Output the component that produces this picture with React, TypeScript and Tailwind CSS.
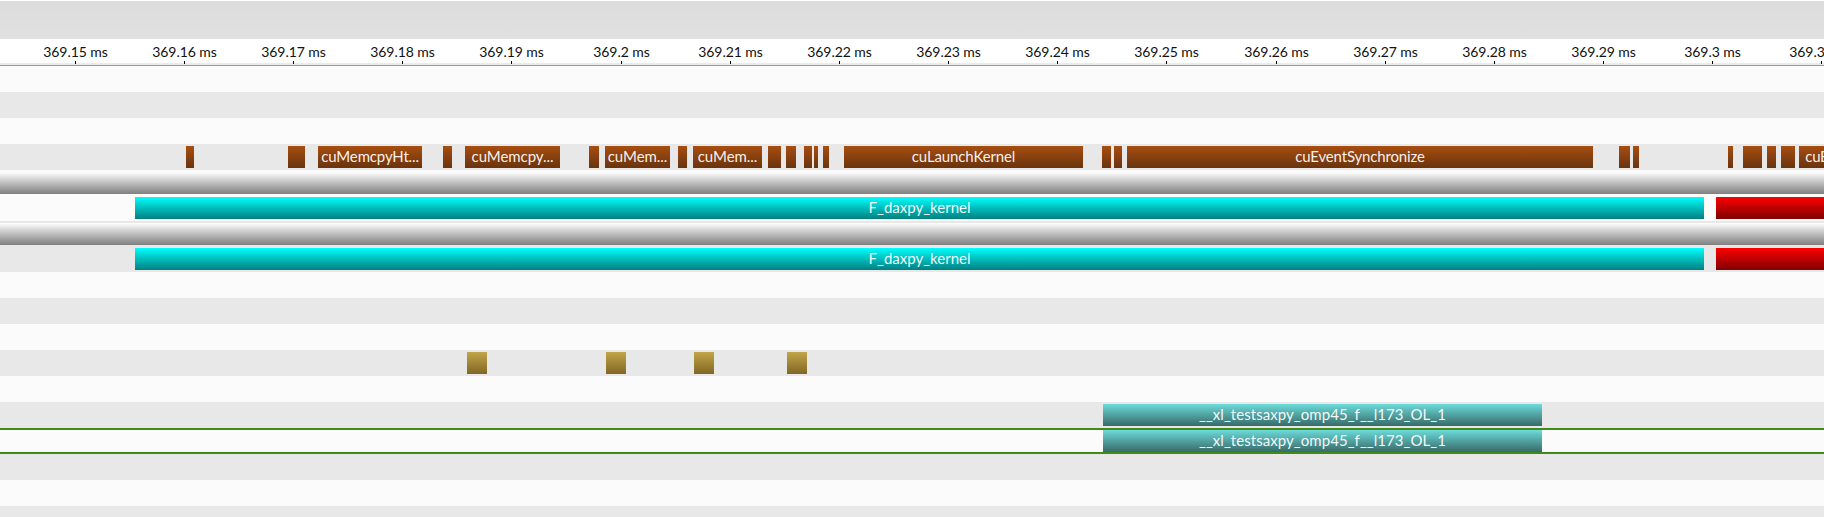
import clsx from "clsx";

type Bar = { box: string; label?: string; text?: string };

const ticks: [string, string][] = [
  ["369.15", "ml-[75px]"],
  ["369.16", "ml-[108px]"],
  ["369.17", "ml-[108px]"],
  ["369.18", "ml-[108px]"],
  ["369.19", "ml-[108px]"],
  ["369.2", "ml-[109px]"],
  ["369.21", "ml-[108px]"],
  ["369.22", "ml-[108px]"],
  ["369.23", "ml-[108px]"],
  ["369.24", "ml-[108px]"],
  ["369.25", "ml-[108px]"],
  ["369.26", "ml-[109px]"],
  ["369.27", "ml-[108px]"],
  ["369.28", "ml-[108px]"],
  ["369.29", "ml-[108px]"],
  ["369.3", "ml-[108px]"],
  ["369.31", "ml-[108px]"],
];

const driverCalls: Bar[] = [
  { box: "ml-[186px] w-[8px]" },
  { box: "ml-[94px] w-[17px]" },
  { box: "ml-[13px] w-[104px]", label: "cuMemcpyHt...", text: "tracking-[-0.15px]" },
  { box: "ml-[21px] w-[9px]" },
  { box: "ml-[13px] w-[95px]", label: "cuMemcpy...", text: "tracking-[-0.06px]" },
  { box: "ml-[29px] w-[10px]" },
  { box: "ml-[6px] w-[65px]", label: "cuMem...", text: "tracking-[-0.06px]" },
  { box: "ml-[8px] w-[9px]" },
  { box: "ml-[6px] w-[69px]", label: "cuMem...", text: "tracking-[-0.06px]" },
  { box: "ml-[6px] w-[13px]" },
  { box: "ml-[5px] w-[10px]" },
  { box: "ml-[8px] w-[8px]" },
  { box: "ml-[2px] w-[4px]" },
  { box: "ml-[5px] w-[6px]" },
  { box: "ml-[15px] w-[239px]", label: "cuLaunchKernel", text: "tracking-[-0.13px]" },
  { box: "ml-[19px] w-[9px]" },
  { box: "ml-[3px] w-[8px]" },
  { box: "ml-[5px] w-[466px]", label: "cuEventSynchronize", text: "tracking-[-0.16px]" },
  { box: "ml-[26px] w-[11px]" },
  { box: "ml-[3px] w-[6px]" },
  { box: "ml-[89px] w-[5px]" },
  { box: "ml-[10px] w-[19px]" },
  { box: "ml-[5px] w-[9px]" },
  { box: "ml-[5px] w-[14px]" },
  { box: "ml-[4px] w-[73px]", label: "cuEvent...", text: "tracking-[-0.3px]" },
];

const copies: Bar[] = [
  { box: "ml-[467px] w-[20px]" },
  { box: "ml-[119px] w-[20px]" },
  { box: "ml-[68px] w-[20px]" },
  { box: "ml-[73px] w-[20px]" },
];

const kernel: Bar[] = [
  { box: "ml-[1103px] w-[439px]", label: "__xl_testsaxpy_omp45_f__l173_OL_1", text: "tracking-[0.05px]" },
];

const brown = "from-[#a84e10] to-[#6a330e]";
const gold = "from-[#c2a548] to-[#826726]";
const teal = "from-[#6cdcdb] to-[#376b69]";

function Bars({ bars, color }: { bars: Bar[]; color: string }) {
  return (
    <div className="flex h-[22px] overflow-hidden">
      {bars.map((b, i) => (
        <div key={i} className={clsx("flex shrink-0 justify-center bg-linear-to-b", color, b.box)}>
          {b.label && (
            <span className={clsx("text-[15px] leading-[21px] whitespace-nowrap text-white/95", b.text)}>{b.label}</span>
          )}
        </div>
      ))}
    </div>
  );
}

function Row({ dark, bars, color = "" }: { dark?: boolean; bars?: Bar[]; color?: string }) {
  return (
    <div className={clsx("h-[26px] shrink-0 pt-0.5", dark ? "bg-[#e8e8e8]" : "bg-[#fbfbfb]")}>
      {bars && <Bars bars={bars} color={color} />}
    </div>
  );
}

function ComputeRow({ dark }: { dark?: boolean }) {
  return (
    <div className={clsx("flex h-[51px] shrink-0 flex-col gap-[3px] pt-0.5", dark ? "bg-[#e8e8e8]" : "bg-[#fbfbfb]")}>
      <div className="h-[22px] bg-linear-to-b from-white to-[#808080]" />
      <div className="flex h-[22px] overflow-hidden">
        <div className="ml-[135px] flex w-[1569px] shrink-0 justify-center bg-linear-to-b from-[#00ffff] to-[#008080]">
          <span className="text-[15px] leading-[21px] text-white/95">F_daxpy_kernel</span>
        </div>
        <div className="ml-[12px] w-[108px] shrink-0 bg-linear-to-b from-[#ff0000] to-[#800000]" />
      </div>
    </div>
  );
}

export default function App() {
  return (
    <div className="flex h-[517px] w-[1824px] flex-col overflow-hidden bg-white font-['Lato',sans-serif]">
      <div className="mt-px h-[38px] shrink-0 bg-linear-to-b from-[#dcdcdc] to-[#e1e1e1]" />
      <div className="flex h-[27px] shrink-0 overflow-hidden border-b border-[#999999] bg-[linear-gradient(#fff_24px,#ebebeb_24px)]">
        {ticks.map(([label, offset]) => (
          <div key={label} className={clsx("flex w-px shrink-0 flex-col items-center", offset)}>
            <span className="h-[22px] text-[14px] leading-[26px] tracking-[-0.05px] whitespace-nowrap text-[#111]">{label} ms</span>
            <span className="h-[3px] w-px shrink-0 bg-black" />
          </div>
        ))}
      </div>
      <Row />
      <Row dark />
      <Row />
      <Row dark bars={driverCalls} color={brown} />
      <ComputeRow />
      <ComputeRow dark />
      <Row />
      <Row dark />
      <Row />
      <Row dark bars={copies} color={gold} />
      <Row />
      <Row dark bars={kernel} color={teal} />
      <div className="h-[26px] shrink-0 border-y-2 border-[#3f8a19] bg-[#fbfbfb]">
        <Bars bars={kernel} color={teal} />
      </div>
      <Row dark />
      <Row />
      <Row dark />
    </div>
  );
}
